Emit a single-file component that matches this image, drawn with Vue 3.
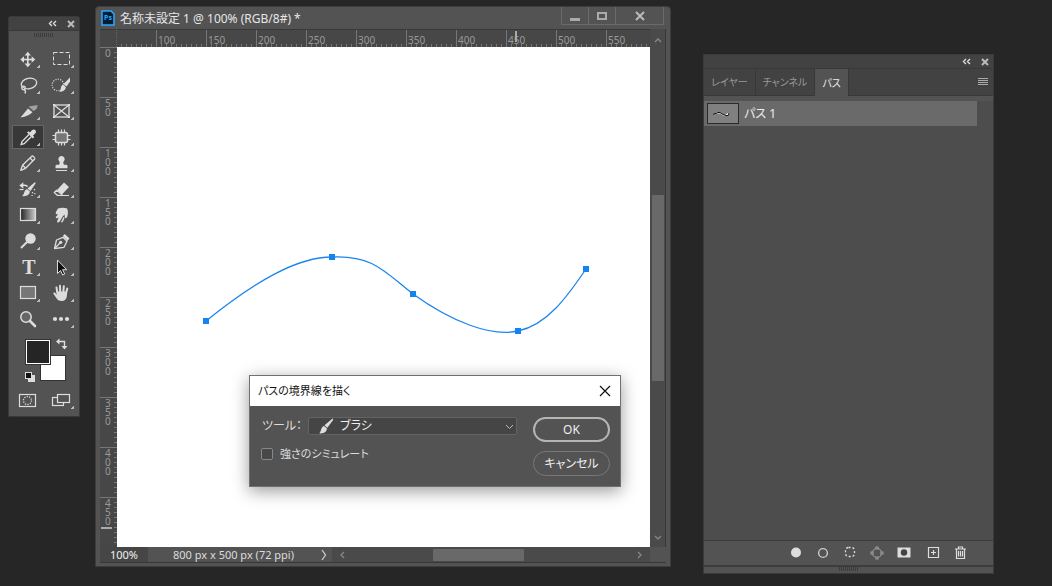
<script setup>
import { ref } from 'vue'

const tools = [
  { name: '移動ツール', art: '<g fill="currentColor"><path d="M15 7h1.600v11H15z"/><path d="M10.500 11.700h11v1.600h-11z"/><path d="M15.800 4.800l3.200 3.700h-6.400z"/><path d="M15.800 20.200l3.200-3.700h-6.400z"/><path d="M8.300 12.500l3.700-3.200v6.400z"/><path d="M23.300 12.500l-3.700-3.200v6.400z"/></g>' },
  { name: '長方形選択ツール', art: '<rect x="7.500" y="5.500" width="16" height="12" fill="none" stroke="currentColor" stroke-dasharray="4 2"/>' },
  { name: 'なげなわツール', art: '<g fill="none" stroke="currentColor" stroke-width="1.300"><ellipse cx="17" cy="10.500" rx="7.800" ry="5.200" transform="rotate(-12 17 10.500)"/><circle cx="11.500" cy="15" r="1.800"/><path d="M12 16.500c1.500.7 2 1.800 1 4"/></g>' },
  { name: 'クイック選択ツール', art: '<circle cx="12" cy="12" r="5.800" fill="none" stroke="currentColor" stroke-width="1.200" stroke-dasharray="1.100 1.300"/><path d="M24 4.500v4l-3.500 5-3-2.500z" fill="currentColor"/><path d="M16.800 11.500l3 2.500c0 3-2.500 4.800-6.500 4.800 1.800-1.200 1-5.500 3.500-7.300z" fill="currentColor"/>' },
  { name: 'スライスツール', art: '<path d="M16.500 7.500l9-1.500c.3 2.800-1.500 5-4 6z" fill="#a0a0a0"/><path d="M16 9.500l4.500 3.800c-2.500 2.700-6.500 4.500-12 5.200z" fill="currentColor"/>' },
  { name: 'フレームツール', art: '<g fill="none" stroke="currentColor" stroke-width="1.300"><rect x="8" y="6" width="15" height="12"/><path d="M8 6l15 12M23 6L8 18"/></g><g fill="currentColor"><path d="M7 5h2v2H7zM22 5h2v2h-2zM7 17h2v2H7zM22 17h2v2h-2z"/></g>' },
  { name: 'スポイトツール', active: true, art: '<path d="M17 9.500l-7 7-.8 3 3-.8 7-7" fill="none" stroke="currentColor" stroke-width="1.400"/><path d="M15 7.500l1.400-1.200 1.500 1.200 2-2.300c1-1 2.700-1 3.500 0 .8.900.8 2.400-.2 3.400l-2.200 2 1.200 1.500-1.300 1.400z" fill="currentColor"/>' },
  { name: 'パッチツール', art: '<rect x="9.500" y="7.500" width="12" height="10" rx="2" fill="#777" stroke="currentColor" stroke-width="1.500"/><path d="M12.500 4.500v3M15.500 4.500v3M18.500 4.500v3M12.500 17.500v3M15.500 17.500v3M18.500 17.500v3M6.500 10.500h3M6.500 14.500h3M21.500 10.500h3M21.500 14.500h3" stroke="currentColor" stroke-width="1.200"/>' },
  { name: '鉛筆ツール', art: '<g fill="none" stroke="currentColor" stroke-width="1.300" stroke-linejoin="round"><path d="M8.800 19.300l1.700-5L19.800 5.200c1-.8 3.500 1.600 2.900 2.800L13.600 17.300z"/><path d="M10.700 14.300l3 3M18 7l3 3"/></g>' },
  { name: 'コピースタンプツール', art: '<path d="M15.500 5a3.200 3.200 0 0 1 2.200 5.500c-.7.700-.5 2 .3 3.200h2c1 0 1.500.7 1.500 1.500v2h-12v-2c0-.8.500-1.500 1.500-1.500h2c.8-1.200 1-2.500.3-3.200A3.200 3.200 0 0 1 15.500 5z" fill="currentColor"/><path d="M10 19.500h11" stroke="currentColor"/>' },
  { name: 'ヒストリーブラシツール', art: '<path d="M22.800 5.200l1 .8-5.300 8-3-2.500z" fill="currentColor"/><path d="M15 12l3 2.600c-.5 3.600-4 5.400-8 4.400 2.500-1 1.500-5.500 5-7z" fill="currentColor"/><path d="M7.300 8.500l4-3.300v2.200c2 0 3.500.2 5 1.600l-1.300 1c-1-.8-2-1-3.700-1v2.500z" fill="currentColor"/><path d="M7.500 12.500h4" stroke="currentColor" stroke-width="1.200"/><path d="M22.500 12v1.200M20.500 15v1.200M22.800 16v1.200M19.500 18.500h1.200" stroke="currentColor" stroke-width="1.200"/>' },
  { name: '消しゴムツール', art: '<path d="M18 5.500l5 4.500-7 7.500-5-4.500z" fill="currentColor"/><path d="M10.500 13.200l-2.200 2.300 3 2.800h3.500l1-1z" fill="none" stroke="currentColor" stroke-width="1.200"/><path d="M13 18.500h10" stroke="currentColor"/>' },
  { name: 'グラデーションツール', art: '<defs><linearGradient id="toolGradient"><stop offset="0" stop-color="#222"/><stop offset="1" stop-color="#ccc"/></linearGradient></defs><rect x="8.500" y="5.500" width="15" height="12" fill="url(#toolGradient)" stroke="currentColor" stroke-width="1.200"/>' },
  { name: '指先ツール', art: '<path d="M12 5.500c2.500-1 6.500-.8 8.700-.2 1.800 2 1.400 6.500.4 9l-2.100 1.200-.5-4-2.200 2.500c-1 1.800-2 4.500-3.800 5.500-1 .3-1.700-.5-1.300-1.500l1.500-3.500-1.800.8c-1 .2-1.500-.8-1-1.500l2.200-2.300c-2 .2-2.800-1-2.200-2.400z" fill="currentColor"/><path d="M17.800 14.300c-.3 2-1 3.500-2.300 5" stroke="currentColor" stroke-width="1.500" fill="none"/>' },
  { name: '覆い焼きツール', art: '<circle cx="18.500" cy="9.500" r="5.200" fill="currentColor"/><path d="M15 13l-6 6" stroke="currentColor" stroke-width="2"/>' },
  { name: 'ペンツール', art: '<g fill="none" stroke="currentColor" stroke-width="1.300" stroke-linejoin="round"><path d="M8.500 19.500l2-8.500 6.500-2.700 4 4-3 6z"/><path d="M8.500 19.500l5.500-5.500"/></g><circle cx="14.700" cy="13.300" r="1.600" fill="currentColor"/><path d="M16.800 7l2-2 4.700 4.500-2 2.200z" fill="currentColor"/>' },
  { name: '横書き文字ツール', art: '<text x="17" y="19" text-anchor="middle" font-family="Liberation Serif, serif" font-size="20" font-weight="bold" fill="currentColor">T</text>' },
  { name: 'パス選択ツール', art: '<path d="M11.500 5v13.500l3-3 2.200 4.500 2-1-2.200-4.300h4.200z" fill="#111" stroke="currentColor"/>' },
  { name: '長方形ツール', art: '<rect x="8.500" y="5.500" width="15" height="12" fill="#777" stroke="currentColor" stroke-width="1.200"/>' },
  { name: '手のひらツール', art: '<path d="M11.300 11.500L10.500 6.500M14.200 10.500L14 4.800M17.400 10.500l.4-5.200M20.200 11.500l1.100-4" stroke="currentColor" stroke-width="2" stroke-linecap="round" fill="none"/><path d="M10.300 10.500h10.900l-.3 4.500c-.5 3.200-2.200 5-5.200 5-2.800 0-4.200-1.200-5.400-3L7.400 12.800c-.4-1.200 1-1.800 1.900-.9l1.800 1.800z" fill="currentColor"/>' },
  { name: 'ズームツール', flat: true, art: '<circle cx="14" cy="10" r="5.200" fill="#666" stroke="currentColor" stroke-width="1.500"/><path d="M18 14l5 5" stroke="currentColor" stroke-width="2.600" stroke-linecap="round"/>' },
  { name: 'ツールバーを編集', art: '<g fill="currentColor"><circle cx="9" cy="12" r="2.100"/><circle cx="15" cy="12" r="2.100"/><circle cx="21" cy="12" r="2.100"/></g>' }
]

const topLabels = Array.from({ length: 10 }, (_, i) => 100 + i * 50)
const sideLabels = Array.from({ length: 10 }, (_, i) => i * 50)
const anchors = [[89, 274], [215, 210], [296, 247], [401, 284], [469, 222]]

const tabs = ['レイヤー', 'チャンネル', 'パス']
const activeTab = ref('パス')
const stroke = ref('ブラシ')
const simulate = ref(false)

const actions = [
  { name: 'パスを塗りつぶす', art: '<circle cx="10" cy="9.500" r="5" fill="#ddd"/>' },
  { name: 'ブラシでパスの境界線を描く', art: '<circle cx="10" cy="10" r="4.400" fill="none" stroke="#ccc" stroke-width="1.400"/>' },
  { name: 'パスを選択範囲として読み込む', art: '<rect x="5.500" y="4.500" width="9" height="9" rx="3" fill="none" stroke="#ddd" stroke-width="1.300" stroke-dasharray="2 2"/>' },
  { name: '選択範囲から作業用パスを作成', art: '<g fill="none" stroke="#999" stroke-width="1.200"><circle cx="10" cy="10" r="4.500"/><g fill="#535353"><path d="M9 4h2v2H9zM9 14h2v2H9zM4 9h2v2H4zM14 9h2v2h-2z"/></g></g>' },
  { name: 'マスクを追加', art: '<path d="M3.500 4.500h13v10h-13z" fill="#ddd"/><circle cx="10" cy="9.500" r="3.200" fill="#444"/>' },
  { name: '新規パスを作成', spaced: true, art: '<path d="M4.500 4.500h10v10h-10zM9.500 7v5M7 9.500h5" fill="none" stroke="#ddd" stroke-width="1.200"/>' },
  { name: '現在のパスを削除', art: '<path d="M4 6h11M7.500 5.500v-1.500h4v1.500M5.500 6.500v9h8v-9M7.500 8v5.500M9.500 8v5.500M11.500 8v5.500" fill="none" stroke="#ddd" stroke-width="1.200"/>' }
]
</script>

<template>
  <main class="desktop">
    <aside class="tools" aria-label="ツール">
      <header class="bar">
        <button class="plain" aria-label="折りたたむ"><svg width="10" height="8"><path d="M4 1L1.500 3.500 4 6M8 1L5.500 3.500 8 6" fill="none" stroke="#ddd" stroke-width="1.400" /></svg></button>
        <button class="plain" aria-label="閉じる"><svg width="8" height="8"><path d="M1 1l6 6M7 1L1 7" stroke="#bbb" stroke-width="2" /></svg></button>
      </header>
      <div class="grip"></div>
      <div class="tool-grid">
        <button v-for="t in tools" :key="t.name" class="tool" :class="{ active: t.active, corner: !t.flat }" :aria-label="t.name">
          <svg width="32" height="24" v-html="t.art"></svg>
        </button>
      </div>
      <svg class="swatches" width="70" height="57" role="img" aria-label="描画色と背景色">
        <rect x="31.500" y="24.500" width="25" height="25" fill="#fff" stroke="#333" />
        <rect x="16" y="8" width="26" height="26" fill="#333" />
        <rect x="17.500" y="9.500" width="23" height="23" fill="#252525" stroke="#fff" />
        <path d="M50 10.500h5.500V16" fill="none" stroke="#ddd" stroke-width="1.400" />
        <path d="M47 10.500l3.500-3v6zM55.500 18.500l-3-3.500h6z" fill="#ddd" />
        <rect x="19" y="44" width="7" height="7" fill="#ddd" />
        <rect x="16.500" y="41.500" width="6" height="6" fill="#111" stroke="#ddd" />
      </svg>
      <div class="modes">
        <button class="tool" aria-label="クイックマスクモード"><svg width="32" height="24"><rect x="7.500" y="6.500" width="16" height="12" fill="none" stroke="#ddd" stroke-width="1.200" /><circle cx="15.500" cy="12.500" r="4" fill="none" stroke="#ddd" stroke-width="1.300" stroke-dasharray="1.200 1.300" /></svg></button>
        <button class="tool corner" aria-label="スクリーンモード"><svg width="32" height="24"><rect x="6.500" y="9.500" width="11" height="8" fill="none" stroke="#ddd" stroke-width="1.200" /><rect x="11.500" y="6.500" width="12" height="8" fill="#535353" stroke="#ddd" stroke-width="1.200" /></svg></button>
      </div>
    </aside>

    <section class="document" aria-label="名称未設定 1">
      <header class="titlebar">
        <svg class="ps" width="14" height="16"><path d="M1 1h9l3 3v11H1z" fill="#001e36" stroke="#31a8ff" stroke-width="1.500" /><text x="7" y="10" text-anchor="middle" font-family="Noto Sans, sans-serif" font-size="7" font-weight="bold" fill="#31a8ff">Ps</text></svg>
        <h1>名称未設定 1 @ 100% (RGB/8#) *</h1>
        <div class="controls">
          <button aria-label="最小化"><svg width="12" height="12"><path d="M1 8h10v3H1z" fill="#aaa" /></svg></button>
          <button aria-label="最大化"><svg width="12" height="12"><rect x="2" y="3" width="8" height="6" fill="none" stroke="#aaa" stroke-width="2" /></svg></button>
          <button class="wide" aria-label="閉じる"><svg width="12" height="12"><path d="M2 2l8 8M10 2l-8 8" stroke="#bbb" stroke-width="2" /></svg></button>
        </div>
      </header>
      <div class="workspace">
        <div class="ruler-corner"></div>
        <div class="ruler top">
          <span v-for="n in topLabels" :key="n">{{ n }}</span>
        </div>
        <div class="scroll vertical">
          <svg width="8" height="5"><path d="M1 4l3-3 3 3" fill="none" stroke="#888" stroke-width="1.300" /></svg>
          <span class="thumb"></span>
          <svg width="8" height="5"><path d="M1 1l3 3 3-3" fill="none" stroke="#888" stroke-width="1.300" /></svg>
        </div>
        <div class="ruler side">
          <span v-for="n in sideLabels" :key="n">{{ n }}</span>
        </div>
        <div class="canvas">
          <svg class="path" width="100%" height="100%" role="img" aria-label="パス 1">
            <path d="M89 274C140 233 181 210 215 210C256 208 268 225 296 247C335 275 374 290 401 284C430 278 450 250 469 222" fill="none" stroke="#1b85ee" stroke-width="1.300" />
            <rect v-for="a in anchors" :key="a[0]" :x="a[0] - 3" :y="a[1] - 3" width="6" height="6" fill="#1583f0" />
          </svg>
          <form class="dialog" role="dialog" aria-labelledby="dialogTitle" @submit.prevent>
            <header>
              <h2 id="dialogTitle">パスの境界線を描く</h2>
              <button type="button" class="plain" aria-label="閉じる"><svg width="12" height="12"><path d="M1 1l10 10M11 1L1 11" stroke="#111" stroke-width="1.200" /></svg></button>
            </header>
            <div class="dialog-body">
              <div class="fields">
                <div class="field">
                  <label for="strokeTool">ツール：</label>
                  <div class="select">
                    <select id="strokeTool" v-model="stroke"><option>ブラシ</option><option>鉛筆</option><option>消しゴム</option></select>
                    <svg class="brush" width="16" height="16"><path d="M14.500.5l.8 1.200-6 8-2.800-2.500z" fill="#ddd" /><path d="M6 8l3 2.500c-.3 3.500-3.500 5.500-8 4.800C3.500 14 2.500 9 6 8z" fill="#ddd" /></svg>
                    <svg class="chevron" width="9" height="6"><path d="M1 1l3.500 3.500L8 1" fill="none" stroke="#bbb" /></svg>
                  </div>
                </div>
                <label class="check"><input v-model="simulate" type="checkbox" />強さのシミュレート</label>
              </div>
              <div class="buttons">
                <button class="primary">OK</button>
                <button type="button">キャンセル</button>
              </div>
            </div>
          </form>
        </div>
      </div>
      <footer class="status">
        <span class="zoom">100%</span>
        <span class="info">800 px x 500 px (72 ppi)<svg width="6" height="12"><path d="M1 1l3.500 5L1 11" fill="none" stroke="#ccc" stroke-width="1.300" /></svg></span>
        <div class="scroll horizontal">
          <svg width="5" height="8"><path d="M4 1L1 4l3 3" fill="none" stroke="#888" stroke-width="1.300" /></svg>
          <span class="thumb"></span>
          <svg width="5" height="8"><path d="M1 1l3 3-3 3" fill="none" stroke="#888" stroke-width="1.300" /></svg>
        </div>
      </footer>
    </section>

    <aside class="panel" aria-label="パスパネル">
      <header class="bar">
        <button class="plain" aria-label="折りたたむ"><svg width="10" height="8"><path d="M4 1L1.500 3.500 4 6M8 1L5.500 3.500 8 6" fill="none" stroke="#ddd" stroke-width="1.400" /></svg></button>
        <button class="plain" aria-label="閉じる"><svg width="8" height="8"><path d="M1 1l6 6M7 1L1 7" stroke="#bbb" stroke-width="2" /></svg></button>
      </header>
      <nav class="tabs">
        <button v-for="t in tabs" :key="t" :class="{ active: t === activeTab }" @click="activeTab = t">{{ t }}</button>
        <button class="menu" aria-label="パネルメニュー"><svg width="10" height="8"><path d="M0 .5h10M0 2.500h10M0 4.500h10M0 6.500h10" stroke="#aaa" /></svg></button>
      </nav>
      <div class="list">
        <div class="row">
          <svg width="32" height="21"><rect x=".5" y=".5" width="31" height="20" fill="#808080" stroke="#2b2b2b" /><path d="M6 11.500l4-2h3l2 1.500 3 1 3-2v1.500l-2 1h-3l-3-2h-2z" fill="#fff" /><path d="M6 11.500l2-1h1l2-1h2l2 1.500 4 1.500h2l1-2" fill="none" stroke="#111" /></svg>
          <span>パス 1</span>
        </div>
      </div>
      <footer class="actions">
        <button v-for="a in actions" :key="a.name" class="plain" :class="{ spaced: a.spaced }" :aria-label="a.name"><svg width="20" height="20" v-html="a.art"></svg></button>
      </footer>
      <div class="grip"></div>
    </aside>
  </main>
</template>

<style>
body {
  background: #262626;
}
</style>

<style scoped>
* {
  box-sizing: border-box;
}
.desktop {
  display: flex;
  align-items: flex-start;
  min-height: 100vh;
  padding: 0 58px 0 8px;
  background: #262626;
  color: #ddd;
  font: 12px/16px "Noto Sans", "Noto Sans CJK JP", sans-serif;
  font-feature-settings: "palt";
}
button {
  margin: 0;
  padding: 0;
  border: 0;
  background: none;
  color: inherit;
  font: inherit;
  font-feature-settings: inherit;
}
svg {
  display: block;
}
h1,
h2 {
  margin: 0;
  font: inherit;
}
.plain {
  display: grid;
  place-items: center;
}
.bar {
  display: flex;
  justify-content: flex-end;
  align-items: center;
  gap: 9px;
  height: 14px;
  flex: none;
  padding-right: 4px;
  background: #424242;
  border-bottom: 1px solid #383838;
}
.grip {
  width: 20px;
  height: 4px;
  margin: 0 auto;
  background: repeating-linear-gradient(90deg, #3c3c3c 0 1px, #535353 1px 2px);
}

.tools {
  flex: none;
  width: 72px;
  margin-top: 16px;
  padding-bottom: 4px;
  background: #535353;
  border: 1px solid #3a3a3a;
  border-radius: 3px 3px 0 0;
}
.tools .grip {
  margin-top: 2px;
}
.tool-grid,
.modes {
  display: grid;
  grid-template-columns: 32px 32px;
  gap: 2px;
  padding: 0 3px;
}
.tool-grid {
  margin-top: 10px;
}
.tool {
  position: relative;
  width: 32px;
  height: 24px;
  color: #ddd;
}
.tool.active {
  background: #383838;
  box-shadow: 0 0 0 1px #666 inset;
}
.tool.corner::after {
  content: "";
  position: absolute;
  right: 4px;
  bottom: 3px;
  width: 3px;
  height: 3px;
  background: linear-gradient(135deg, transparent 45%, #bbb 50%);
}

.document {
  flex: 1;
  display: flex;
  flex-direction: column;
  min-width: 0;
  height: calc(100vh - 25px);
  margin: 6px 32px 0 15px;
  padding: 0 4px 3px;
  background: #535353;
  border: 1px solid #3d3d3d;
  border-radius: 4px 4px 0 0;
}
.titlebar {
  display: flex;
  align-items: center;
  height: 22px;
  flex: none;
}
.ps {
  margin: 0 5px 0 1px;
}
.titlebar h1 {
  flex: 1;
  min-width: 0;
  overflow: hidden;
  white-space: nowrap;
  line-height: 20px;
  padding-top: 2px;
  color: #e6e6e6;
}
.controls {
  display: flex;
  align-self: flex-start;
  margin-right: 2px;
  border: solid #6a6a6a;
  border-width: 0 1px 1px 0;
}
.controls button {
  display: grid;
  place-items: center;
  width: 27px;
  height: 17px;
  border-left: 1px solid #6a6a6a;
}
.controls .wide {
  width: 48px;
}
.workspace {
  flex: 1;
  min-height: 0;
  display: grid;
  grid-template: 18px minmax(0, 1fr) / 17px minmax(0, 1fr) 16px;
}
.ruler,
.ruler-corner {
  position: relative;
  background: #474747;
}
.ruler {
  display: flex;
  overflow: hidden;
  color: #999;
  font-size: 10px;
}
.ruler span {
  flex: none;
}
.ruler::before,
.ruler::after {
  content: "";
  position: absolute;
}
.ruler.top,
.ruler-corner {
  border-top: 1px solid #383838;
}
.ruler-corner {
  border-right: 1px dotted #666;
}
.top {
  padding-left: 39px;
}
.top span {
  width: 50px;
  padding: 1px 0 0 1px;
  border-left: 1px solid #777;
  line-height: 18px;
}
.top::before {
  inset: auto 0 0 4px;
  height: 3px;
  background: repeating-linear-gradient(90deg, #777 0 1px, transparent 1px 5px);
}
.top::after {
  left: 398px;
  top: 1px;
  width: 2px;
  height: 11px;
  background: #aaa;
}
.side {
  flex-direction: column;
}
.side span {
  width: 17px;
  height: 50px;
  padding: 1px 6px 0 5px;
  border-top: 1px solid #777;
  line-height: 9px;
  word-break: break-all;
}
.side::before {
  inset: 0 0 0 auto;
  width: 3px;
  background: repeating-linear-gradient(180deg, #777 0 1px, transparent 1px 5px);
}
.side::after {
  left: 1px;
  top: 480px;
  width: 11px;
  height: 2px;
  background: #aaa;
}
.scroll {
  display: flex;
  align-items: center;
  background: #4a4a4a;
}
.scroll .thumb {
  background: #696969;
  border-radius: 1px;
}
.vertical {
  grid-column: 3;
  grid-row: 1 / 3;
  flex-direction: column;
  padding: 9px 0 7px;
  border-right: 1px solid #383838;
}
.vertical .thumb {
  width: 12px;
  height: 37%;
  margin: 152px 0 auto;
}
.canvas {
  position: relative;
  overflow: hidden;
  background: #fff;
}
.status {
  display: flex;
  height: 16px;
  flex: none;
  padding-right: 16px;
  border-bottom: 1px solid #383838;
  font-size: 11px;
}
.zoom {
  width: 48px;
  background: #464646;
  color: #f0f0f0;
  text-align: center;
}
.info {
  display: flex;
  align-items: center;
  justify-content: space-between;
  width: 184px;
  padding: 0 5px 0 25px;
  white-space: nowrap;
}
.horizontal {
  flex: 1;
  padding: 0 8px;
}
.horizontal .thumb {
  width: 30%;
  height: 12px;
  margin: 0 auto 0 88px;
}

.dialog {
  position: absolute;
  left: 132px;
  top: 328px;
  width: 372px;
  background: #535353;
  border: 1px solid #707070;
  box-shadow: 0 4px 16px rgba(0, 0, 0, 0.4);
}
.dialog header {
  display: flex;
  align-items: center;
  justify-content: space-between;
  height: 30px;
  padding: 0 9px 0 8px;
  background: #fff;
  color: #111;
  font-size: 11px;
}
.dialog-body {
  display: flex;
  justify-content: space-between;
  padding: 11px 10px 10px 11px;
}
.field {
  display: flex;
  align-items: center;
  gap: 6px;
  height: 18px;
}
.field label {
  width: 41px;
  padding-left: 1px;
  white-space: nowrap;
}
.select {
  position: relative;
}
select {
  display: block;
  appearance: none;
  width: 209px;
  height: 18px;
  padding: 0 0 0 31px;
  background: #454545;
  border: 1px solid #636363;
  border-radius: 2px;
  color: #eee;
  font: inherit;
  font-feature-settings: inherit;
}
.brush,
.chevron {
  position: absolute;
  pointer-events: none;
}
.brush {
  left: 10px;
  top: 1px;
}
.chevron {
  right: 3px;
  top: 7px;
}
.check {
  display: flex;
  align-items: center;
  gap: 7px;
  margin-top: 11px;
  font-size: 11px;
}
input {
  appearance: none;
  width: 12px;
  height: 12px;
  margin: 0;
  background: #484848;
  border: 1px solid #888;
  border-radius: 2px;
}
.buttons {
  display: grid;
  gap: 9px;
}
.buttons button {
  width: 77px;
  height: 25px;
  border: 1px solid #777;
  border-radius: 13px;
  color: #eee;
}
.buttons .primary {
  border: 2px solid #b5b5b5;
}

.panel {
  flex: none;
  display: flex;
  flex-direction: column;
  width: 291px;
  height: calc(100vh - 66px);
  margin-top: 54px;
  background: #535353;
  border: 1px solid #3a3a3a;
}
.tabs {
  display: flex;
  height: 27px;
  flex: none;
  background: #424242;
  border-bottom: 1px solid #383838;
  color: #999;
  font-size: 10px;
}
.tabs button {
  padding: 0 7px;
  border-right: 1px solid #383838;
}
.tabs .active {
  height: 27px;
  background: #535353;
  color: #eee;
}
.tabs .menu {
  margin-left: auto;
  padding-right: 5px;
  border: 0;
}
.list {
  flex: 1;
  margin-top: 5px;
  padding-right: 16px;
  background: #4d4d4d;
}
.row {
  display: flex;
  align-items: center;
  gap: 5px;
  height: 25px;
  padding-left: 3px;
  background: #6a6a6a;
  color: #eee;
}
.actions {
  display: flex;
  align-items: center;
  justify-content: flex-end;
  gap: 7px;
  height: 27px;
  flex: none;
  padding-right: 22px;
  border: solid #3c3c3c;
  border-width: 1px 0 2px;
}
.spaced {
  margin-left: 3px;
}
.panel > .grip {
  margin-bottom: 2px;
}
</style>
